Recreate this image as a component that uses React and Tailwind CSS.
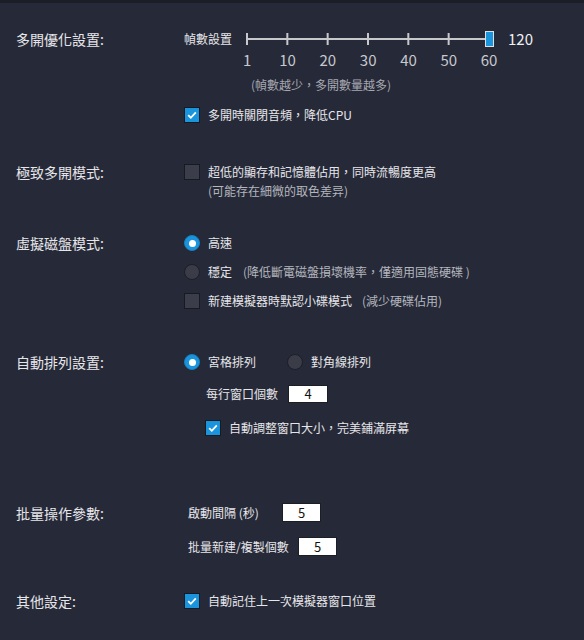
import React from 'react';

const Check = ({ checked }) => (
    <div
        className={`w-4 h-4 shrink-0 border border-[#181a22] flex items-center justify-center ${checked ? 'bg-[#1a94dc]' : 'bg-[#3b3e4a]'}`}
    >
        {checked && (
            <svg width="12" height="12" viewBox="0 0 12 12">
                <path d="M2.2 6.2 L4.8 8.8 L9.8 3.4" fill="none" stroke="#ffffff" strokeWidth="1.8" />
            </svg>
        )}
    </div>
);

const Radio = ({ checked }) => (
    <div
        className={`w-4 h-4 shrink-0 rounded-full border flex items-center justify-center ${checked ? 'bg-[#1a94dc] border-[#1580c0]' : 'bg-[#3a3d48] border-[#1c1e27]'}`}
    >
        {checked && <div className="w-[7px] h-[7px] rounded-full bg-white" />}
    </div>
);

const Box = ({ value, className }) => (
    <div className={`bg-white border border-[#1c1e26] flex items-center justify-center text-[13px] text-[#111] ${className}`}>
        {value}
    </div>
);

const Label = ({ children, h = 'h-4' }) => (
    <div className={`w-[168px] shrink-0 ${h} flex items-center text-[14px] text-[#e6e6ea]`}>{children}</div>
);

const ticks = [1, 10, 20, 30, 40, 50, 60];

export default function App() {
    return (
        <div className="min-h-[640px] w-[584px] bg-[#262a38] border-t-[3px] border-[#1b1e27] pl-4 text-[12px] leading-4 text-[#e6e6ea] font-['Noto_Sans_CJK_TC','Noto_Sans',sans-serif]">
            {/* 多開優化 */}
            <div className="flex pt-[26px]">
                <Label h="h-5">多開優化設置:</Label>
                <div className="flex flex-col">
                    <div className="flex items-center h-5">
                        <span className="w-[48px]">幀數設置</span>
                        <svg className="ml-[14px]" width="250" height="20" viewBox="0 0 250 20">
                            <line x1="1" y1="10" x2="243" y2="10" stroke="#c8c8cc" strokeWidth="2" />
                            {[0, 1, 2, 3, 4, 5].map((i) => (
                                <line key={i} x1={1 + i * 40.33} y1="4" x2={1 + i * 40.33} y2="16" stroke="#c8c8cc" strokeWidth="2" />
                            ))}
                            <rect x="239.5" y="2.5" width="8" height="15" fill="#1a94dc" stroke="#e0e0e4" strokeWidth="1" />
                        </svg>
                        <span className="ml-3 text-[15px] text-[#f0f0f2]">120</span>
                    </div>
                    <div className="flex mt-px h-5 ml-[43px] text-[15px] leading-5 text-[#c8c8ce]">
                        {ticks.map((t) => (
                            <span key={t} className="w-[40.33px] text-center">{t}</span>
                        ))}
                    </div>
                    <div className="mt-[7px] ml-[67px] text-[#a6a8b0]">(幀數越少，多開數量越多)</div>
                    <div className="mt-[14px] flex items-center gap-2 h-4">
                        <Check checked />
                        <span>多開時關閉音頻，降低CPU</span>
                    </div>
                </div>
            </div>

            {/* 極致多開 */}
            <div className="flex mt-[41px]">
                <Label>極致多開模式:</Label>
                <div className="flex flex-col">
                    <div className="flex items-center gap-2 h-4">
                        <Check />
                        <span>超低的顯存和記憶體佔用，同時流暢度更高</span>
                    </div>
                    <div className="mt-[3px] ml-6 text-[#b4b6be]">(可能存在細微的取色差异)</div>
                </div>
            </div>

            {/* 虛擬磁盤 */}
            <div className="flex mt-[36px]">
                <Label>虛擬磁盤模式:</Label>
                <div className="flex flex-col">
                    <div className="flex items-center gap-2 h-4">
                        <Radio checked />
                        <span>高速</span>
                    </div>
                    <div className="mt-[13px] flex items-center gap-2 h-4">
                        <Radio />
                        <span>穩定</span>
                        <span className="ml-[3px] text-[#b4b6be]">(降低斷電磁盤損壞機率，僅適用固態硬碟 )</span>
                    </div>
                    <div className="mt-[13px] flex items-center gap-2 h-4">
                        <Check />
                        <span>新建模擬器時默認小碟模式</span>
                        <span className="ml-[2px] text-[#b4b6be]">(減少硬碟佔用)</span>
                    </div>
                </div>
            </div>

            {/* 自動排列 */}
            <div className="flex mt-[45px]">
                <Label>自動排列設置:</Label>
                <div className="flex flex-col">
                    <div className="flex items-center h-4">
                        <div className="w-[103px] flex items-center gap-2">
                            <Radio checked />
                            <span>宮格排列</span>
                        </div>
                        <div className="flex items-center gap-2">
                            <Radio />
                            <span>對角線排列</span>
                        </div>
                    </div>
                    <div className="mt-[15px] h-[18px] flex items-center pl-[22px]">
                        <span className="w-[82px]">每行窗口個數</span>
                        <Box value="4" className="w-[40px] h-[18px]" />
                    </div>
                    <div className="mt-[17px] h-4 flex items-center gap-2 pl-[21px]">
                        <Check checked />
                        <span>自動調整窗口大小，完美鋪滿屏幕</span>
                    </div>
                </div>
            </div>

            {/* 批量操作 */}
            <div className="flex mt-[67px]">
                <Label h="h-[19px]">批量操作參數:</Label>
                <div className="flex flex-col pl-1">
                    <div className="h-[19px] flex items-center">
                        <span className="w-[94px]">啟動間隔 (秒)</span>
                        <Box value="5" className="w-[39px] h-[19px]" />
                    </div>
                    <div className="mt-[15px] h-[19px] flex items-center">
                        <span className="w-[110px]">批量新建/複製個數</span>
                        <Box value="5" className="w-[39px] h-[19px]" />
                    </div>
                </div>
            </div>

            {/* 其他 */}
            <div className="flex mt-[37px]">
                <Label>其他設定:</Label>
                <div className="flex items-center gap-2 h-4">
                    <Check checked />
                    <span>自動記住上一次模擬器窗口位置</span>
                </div>
            </div>
        </div>
    );
}
